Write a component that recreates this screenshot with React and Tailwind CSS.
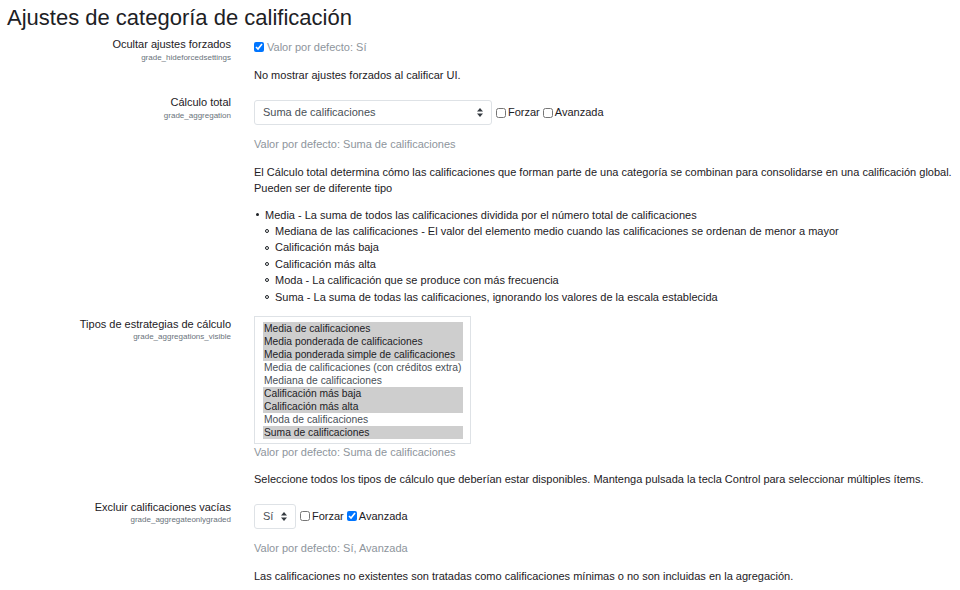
import React from 'react';

const Box = ({ checked }) => (
  <input
    type="checkbox"
    defaultChecked={checked}
    className="m-0 h-[10px] w-[10px] shrink-0 accent-[#0075ff]"
  />
);

const Arrows = () => (
  <svg width="6" height="9" viewBox="0 0 6 9" className="shrink-0">
    <path d="M3 0 L6 3.5 L0 3.5 Z" fill="#343a40" />
    <path d="M3 9 L6 5.5 L0 5.5 Z" fill="#343a40" />
  </svg>
);

const Select = ({ value, width }) => (
  <div
    className={`flex h-[25px] items-center justify-between rounded-[3px] border border-[#dee2e6] bg-white pl-[8px] pr-[8px] text-[#495057] ${width}`}
  >
    <span>{value}</span>
    <Arrows />
  </div>
);

const Option = ({ children }) => (
  <div className="flex items-center">
    <Box />
    <span className="ml-[2px] mr-[3px]">{children}</span>
  </div>
);

const Label = ({ title, code }) => (
  <div className="w-[231px] shrink-0 text-right">
    <div className="leading-[16.5px]">{title}</div>
    <div className="text-[8px] leading-[10px] text-[#6a737b]">{code}</div>
  </div>
);

const Row = ({ title, code, children, className }) => (
  <div className={`flex items-start ${className}`}>
    <Label title={title} code={code} />
    <div className="ml-[23px] flex-1">{children}</div>
  </div>
);

const opciones = [
  ['Media de calificaciones', true],
  ['Media ponderada de calificaciones', true],
  ['Media ponderada simple de calificaciones', true],
  ['Media de calificaciones (con créditos extra)', false],
  ['Mediana de calificaciones', false],
  ['Calificación más baja', true],
  ['Calificación más alta', true],
  ['Moda de calificaciones', false],
  ['Suma de calificaciones', true],
];

const sub = [
  'Mediana de las calificaciones - El valor del elemento medio cuando las calificaciones se ordenan de menor a mayor',
  'Calificación más baja',
  'Calificación más alta',
  'Moda - La calificación que se produce con más frecuencia',
  'Suma - La suma de todas las calificaciones, ignorando los valores de la escala establecida',
];

export default function App() {
  return (
    <div className="h-[590px] w-[960px] overflow-hidden bg-white font-['Liberation_Sans',Arial,sans-serif] text-[11px] leading-[16.5px] text-[#1d2125]">
      <h2 className="pl-[7px] pt-[5px] text-[22px] leading-[26px]">Ajustes de categoría de calificación</h2>

      <Row title="Ocultar ajustes forzados" code="grade_hideforcedsettings" className="mt-[5px]">
        <div className="mt-[3px] flex items-center">
          <Box checked />
          <span className="ml-[3px] text-[#8e959c]">Valor por defecto: Sí</span>
        </div>
        <p className="mt-[11px]">No mostrar ajustes forzados al calificar UI.</p>
      </Row>

      <Row title="Cálculo total" code="grade_aggregation" className="mt-[11px]">
        <div className="mt-[6px] flex items-center">
          <Select value="Suma de calificaciones" width="w-[238px]" />
          <div className="ml-[4px] flex items-center">
            <Option>Forzar</Option>
            <Option>Avanzada</Option>
          </div>
        </div>
        <p className="mt-[11px] text-[#8e959c]">Valor por defecto: Suma de calificaciones</p>
        <p className="mt-[11px]">
          El Cálculo total determina cómo las calificaciones que forman parte de una categoría se combinan para consolidarse en una calificación global.
          <br />
          Pueden ser de diferente tipo
        </p>
        <ul className="mt-[10px] leading-[16.4px]">
          <li className="flex items-center">
            <span className="ml-[2px] mr-[6px] h-[3px] w-[3px] rounded-full bg-[#1d2125]" />
            Media - La suma de todos las calificaciones dividida por el número total de calificaciones
          </li>
          {sub.map((s) => (
            <li key={s} className="flex items-center">
              <span className="ml-[11px] mr-[6px] h-[4px] w-[4px] rounded-full border border-[#1d2125]" />
              {s}
            </li>
          ))}
        </ul>
      </Row>

      <Row title="Tipos de estrategias de cálculo" code="grade_aggregations_visible" className="mt-[11px]">
        <div className="w-[217px] border border-[#dee2e6] pb-[4px] pl-[8px] pr-[7px] pt-[5px] text-[10.3px] leading-[13px]">
          {opciones.map(([o, sel]) => (
            <div key={o} className={`pl-[1px] ${sel ? 'bg-[#cecece] text-[#1d2125]' : 'text-[#495057]'}`}>
              {o}
            </div>
          ))}
        </div>
        <p className="text-[#8e959c]">Valor por defecto: Suma de calificaciones</p>
        <p className="mt-[11px]">
          Seleccione todos los tipos de cálculo que deberían estar disponibles. Mantenga pulsada la tecla Control para seleccionar múltiples ítems.
        </p>
      </Row>

      <Row title="Excluir calificaciones vacías" code="grade_aggregateonlygraded" className="mt-[11px]">
        <div className="mt-[5px] flex items-center">
          <Select value="Sí" width="w-[42px]" />
          <div className="ml-[4px] flex items-center">
            <Option>Forzar</Option>
            <div className="flex items-center">
              <Box checked />
              <span className="ml-[2px]">Avanzada</span>
            </div>
          </div>
        </div>
        <p className="mt-[11px] text-[#8e959c]">Valor por defecto: Sí, Avanzada</p>
        <p className="mt-[12px]">
          Las calificaciones no existentes son tratadas como calificaciones mínimas o no son incluidas en la agregación.
        </p>
      </Row>
    </div>
  );
}
